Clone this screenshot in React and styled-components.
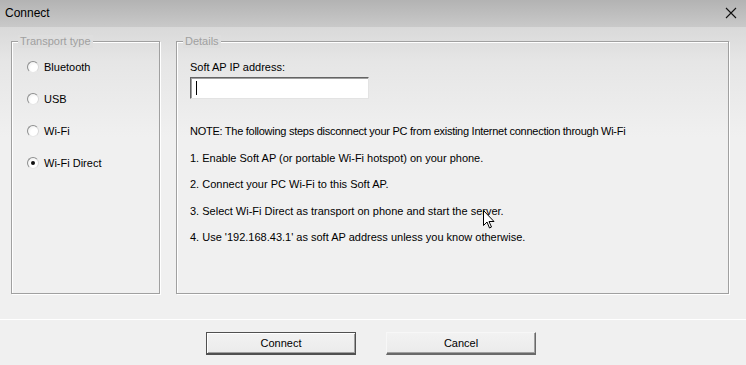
import React from 'react';
import styled, { createGlobalStyle } from 'styled-components';

const GlobalStyle = createGlobalStyle`
    html, body {
        margin: 0;
        padding: 0;
        background: #f0f0f0;
    }
    body {
        font-family: "Liberation Sans", Arial, sans-serif;
        font-size: 11px;
        color: #000;
    }
`;

const Window = styled.div`
    position: relative;
    width: 746px;
    height: 365px;
    display: flex;
    flex-direction: column;
    overflow: hidden;
    background: #f0f0f0;
`;

const TitleBar = styled.div`
    height: 27px;
    flex: none;
    display: flex;
    align-items: center;
    justify-content: space-between;
    padding: 0 9px 2px 5px;
    box-sizing: border-box;
    background: linear-gradient(#b3b3b3, #c9c9c9);
    font-size: 12px;
`;

const CloseButton = styled.div`
    width: 12px;
    height: 12px;
    display: flex;
`;

const Content = styled.div`
    flex: none;
    height: 293px;
    box-sizing: border-box;
    display: flex;
    gap: 16px;
    padding: 14px 17px 0 11px;
    background: linear-gradient(#d9d9d9 0px, #e6e6e6 35px, #f0f0f0 110px);
    border-bottom: 1px solid #fff;
`;

const GroupBox = styled.div`
    position: relative;
    width: ${p => p.$width || 'auto'};
    flex: ${p => (p.$grow ? 1 : 'none')};
    height: 253px;
    box-sizing: border-box;
    border: 1px solid #a0a0a0;
    box-shadow: inset 1px 1px 0 #fff, 1px 1px 0 #fff;
    padding: ${p => p.$pad};
`;

const Legend = styled.span`
    position: absolute;
    top: -7px;
    left: 6px;
    padding: 0 2px;
    line-height: 13px;
    color: #a0a0a0;
    background: ${p => p.$bg};
`;

const RadioRow = styled.label`
    display: flex;
    align-items: center;
    gap: 5px;
    height: 32px;
`;

const RadioCircle = styled.span`
    width: 12px;
    height: 12px;
    border-radius: 50%;
    box-sizing: border-box;
    border: 1px solid #8e8f8f;
    border-right-color: #d8d8d8;
    border-bottom-color: #e8e8e8;
    background: radial-gradient(circle at 65% 65%, #fff 40%, #e6e6e6 100%);
    display: flex;
    align-items: center;
    justify-content: center;

    &::after {
        content: '';
        width: 4px;
        height: 4px;
        border-radius: 50%;
        background: ${p => (p.$checked ? '#111' : 'transparent')};
    }
`;

const FieldLabel = styled.div`
    line-height: 13px;
`;

const TextField = styled.div`
    width: 179px;
    height: 22px;
    margin-top: 3px;
    box-sizing: border-box;
    background: #fff;
    border: 1px solid #e3e3e3;
    border-top-color: #646464;
    border-left-color: #646464;
    box-shadow: inset 1px 1px 0 #a0a0a0;
    display: flex;
    align-items: center;
    padding-left: 5px;
`;

const Caret = styled.span`
    width: 1px;
    height: 14px;
    background: #000;
`;

const Notes = styled.div`
    margin-top: 19px;
    display: flex;
    flex-direction: column;
`;

const NoteLine = styled.div`
    line-height: 26.5px;
    white-space: nowrap;
    letter-spacing: ${p => (p.$tight ? '-0.27px' : 'normal')};
`;

const Footer = styled.div`
    flex: 1;
    display: flex;
    justify-content: center;
    gap: 30px;
    padding: 12px 4px 0 0;
    box-sizing: border-box;
`;

const Button = styled.button`
    width: 150px;
    height: 23px;
    box-sizing: border-box;
    font-family: inherit;
    font-size: 11px;
    color: #000;
    padding: 0;
    background: linear-gradient(#f2f2f2, #ebebeb);
    border: 1px solid ${p => (p.$default ? '#505050' : '#f7f7f7')};
    border-right-color: ${p => (p.$default ? '#505050' : '#696969')};
    border-bottom: 2px solid ${p => (p.$default ? '#505050' : '#696969')};
    box-shadow: ${p => (p.$default
        ? 'inset 1px 1px 0 #fff, inset -1px -1px 0 #a0a0a0'
        : 'inset -1px -1px 0 #a0a0a0')};
`;

const Pointer = styled.svg`
    position: absolute;
    left: 483px;
    top: 210px;
`;

const transports = ['Bluetooth', 'USB', 'Wi-Fi', 'Wi-Fi Direct'];

const steps = [
    'NOTE: The following steps disconnect your PC from existing Internet connection through Wi-Fi',
    '1. Enable Soft AP (or portable Wi-Fi hotspot) on your phone.',
    '2. Connect your PC Wi-Fi to this Soft AP.',
    '3. Select Wi-Fi Direct as transport on phone and start the server.',
    "4. Use '192.168.43.1' as soft AP address unless you know otherwise.",
];

function App() {
    return (
        <Window>
            <GlobalStyle />
            <TitleBar>
                <span>Connect</span>
                <CloseButton>
                    <svg width="12" height="12" viewBox="0 0 12 12">
                        <path d="M1 1 L11 11 M11 1 L1 11" stroke="#111" strokeWidth="1.1" />
                    </svg>
                </CloseButton>
            </TitleBar>
            <Content>
                <GroupBox $width="149px" $pad="9px 0 0 15px">
                    <Legend $bg="#dedede">Transport type</Legend>
                    {transports.map(t => (
                        <RadioRow key={t}>
                            <RadioCircle $checked={t === 'Wi-Fi Direct'} />
                            {t}
                        </RadioRow>
                    ))}
                </GroupBox>
                <GroupBox $grow $pad="19px 0 0 13px">
                    <Legend $bg="#dedede">Details</Legend>
                    <FieldLabel>Soft AP IP address:</FieldLabel>
                    <TextField>
                        <Caret />
                    </TextField>
                    <Notes>
                        {steps.map((s, i) => (
                            <NoteLine key={s} $tight={i === 0}>{s}</NoteLine>
                        ))}
                    </Notes>
                </GroupBox>
            </Content>
            <Footer>
                <Button $default>Connect</Button>
                <Button>Cancel</Button>
            </Footer>
            <Pointer width="12" height="19" viewBox="0 0 12 19">
                <path
                    d="M0.5 0.5 L0.5 15.5 L4 12 L6.5 18 L8.5 17 L6 11.5 L11 11.5 Z"
                    fill="#fff"
                    stroke="#000"
                    strokeWidth="1"
                    strokeLinejoin="miter"
                />
            </Pointer>
        </Window>
    );
}

export default App;
